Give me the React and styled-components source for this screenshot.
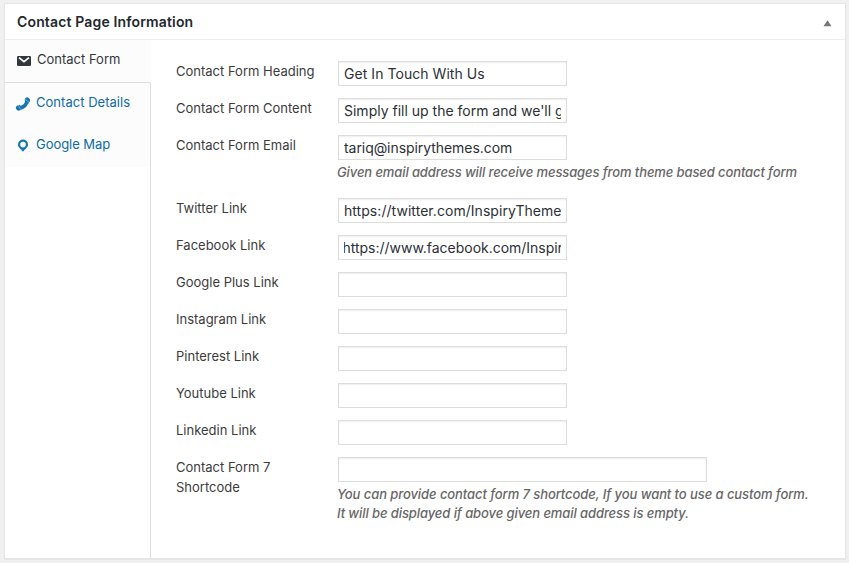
import React from "react";
import styled, { createGlobalStyle } from "styled-components";

const GlobalStyle = createGlobalStyle`
  *, *::before, *::after { box-sizing: border-box; }
  body {
    margin: 0;
    background: #f0f0f0;
    color: #3c3c3c;
    font-family: Inter, "Open Sans", sans-serif;
    font-size: 13px;
    line-height: 20px;
  }
`;

const Page = styled.main`
  height: 563px;
  padding: 3px 3px 4px 4px;
`;

const MetaBox = styled.section`
  display: flex;
  flex-direction: column;
  height: 556px;
  background: #fff;
  border: 1px solid #e5e5e5;
  box-shadow: 0 1px 1px rgba(0, 0, 0, 0.04);
`;

const Header = styled.header`
  display: flex;
  align-items: center;
  justify-content: space-between;
  height: 36px;
  flex: none;
  padding: 0 13px 0 12px;
  border-bottom: 1px solid #eee;
`;

const Title = styled.h2`
  margin: 0;
  color: #23282d;
  font-size: 14px;
  font-weight: 600;
  line-height: 20px;
  letter-spacing: 0.15px;
`;

const Toggle = styled.button`
  display: flex;
  padding: 3px 0 0;
  border: 0;
  background: none;
  color: #72777c;
`;

const Body = styled.div`
  display: flex;
  flex: 1;
`;

const Sidebar = styled.nav`
  display: flex;
  flex-direction: column;
  width: 146px;
`;

const Tab = styled.a`
  display: flex;
  height: ${(p) => (p.$active ? 43 : 42)}px;
  padding: ${(p) => (p.$active ? "9px 0 0 12px" : "9px 0 0 10px")};
  background: #fcfcfc;
  border-right: 1px solid ${(p) => (p.$active ? "transparent" : "#ddd")};
  border-bottom: ${(p) => (p.$active ? "1px solid #ddd" : "0")};
  color: ${(p) => (p.$active ? "#32373c" : "#0c6ca6")};
  letter-spacing: ${(p) => p.$tracking}px;
  text-decoration: none;
  white-space: nowrap;
`;

const TabIcon = styled.svg`
  flex: none;
  width: 16px;
  height: 16px;
  margin: ${(p) => (p.$active ? "4px 4px 0 -1px" : "4px 5px 0 0")};
  color: ${(p) => (p.$active ? "#32373c" : "#1577b0")};
`;

const TabText = styled.span`
  padding-left: ${(p) => (p.$active ? 1 : 0)}px;
`;

const SidebarRest = styled.div`
  flex: 1;
  border-right: 1px solid #ddd;
`;

const Form = styled.form`
  flex: 1;
  display: flex;
  flex-direction: column;
  gap: 12px;
  padding: 21px 0 0 25px;
`;

const Row = styled.div`
  display: grid;
  grid-template-columns: 162px 1fr;
  align-items: start;
  min-height: 25px;
`;

const Label = styled.label`
  width: 130px;
  white-space: ${(p) => (p.$wrap ? "pre-line" : "nowrap")};
`;

const Field = styled.div`
  display: flex;
  flex-direction: column;
`;

const Input = styled.input`
  width: ${(p) => (p.$wide ? 369 : 229)}px;
  height: 25px;
  margin: 0;
  padding: 3px 5px;
  border: 1px solid #ddd;
  border-radius: 0;
  background: #fff;
  box-shadow: inset 0 1px 2px rgba(0, 0, 0, 0.07);
  color: #2b3036;
  font: 14px/17px Inter, "Open Sans", sans-serif;
  letter-spacing: ${(p) => p.$tracking}px;
  text-indent: ${(p) => p.$shift || 0}px;
  outline: none;
`;

const Description = styled.p`
  margin: 3px 0 4px -1px;
  color: #666;
  font-style: italic;
  font-weight: 500;
  line-height: 19px;
  white-space: nowrap;
`;

const Line = styled.span`
  display: block;
  letter-spacing: ${(p) => p.$tracking}px;
`;

const MailIcon = () => (
  <TabIcon $active viewBox="0 0 16 16">
    <path fill="currentColor" d="M2.200 3h11.600q1.200 0 1.200 1.200v7.600q0 1.200-1.200 1.200H2.200q-1.200 0-1.200-1.200V4.200q0-1.200 1.200-1.200z" />
    <path fill="none" stroke="#fff" strokeWidth="1.700" d="M3 4.600 8 8.700l5-4.100" />
  </TabIcon>
);

const PhoneIcon = () => (
  <TabIcon viewBox="0 0 16 16">
    <path
      fill="none"
      stroke="currentColor"
      strokeWidth="3.600"
      d="M12 4.500C11.600 8.500 9 11.300 4.500 11.900"
    />
    <path
      fill="currentColor"
      d="M10.300 2.200q1.700-1.700 3.500-.2t1.200 3.100l-1.500 2.600-4-3.400zM2 9.700q-1.900 1.200-1 3.100t2.900 1.900l3.600-1.400-2.800-4.500z"
    />
    <path fill="none" stroke="#fcfcfc" strokeWidth=".4" d="m10 3.300 4.500 3.500M3.300 9.400l2.700 4.400" />
  </TabIcon>
);

const PinIcon = () => (
  <TabIcon viewBox="0 0 16 16">
    <path
      fill="currentColor"
      fillRule="evenodd"
      d="M8 1.500a5 5 0 0 1 5 5c0 2.900-2.700 4.200-5 7.300-2.300-3.100-5-4.400-5-7.300a5 5 0 0 1 5-5m0 2.300a2.800 2.800 0 1 0 0 5.600 2.800 2.800 0 0 0 0-5.600"
    />
  </TabIcon>
);

const fields = [
  { label: "Contact Form Heading", value: "Get In Touch With Us", vt: 0.05 },
  { label: "Contact Form Content", value: "Simply fill up the form and we'll get back to you" },
  {
    label: "Contact Form Email",
    value: "tariq@inspirythemes.com",
    vt: -0.06,
    note: [{ text: "Given email address will receive messages from theme based contact form", t: -0.11 }],
  },
  { label: "Twitter Link", value: "https://twitter.com/InspiryThemes", vt: 0.05 },
  { label: "Facebook Link", value: "https://www.facebook.com/InspiryThemes", shift: -1.5, vt: -0.02 },
  { label: "Google Plus Link" },
  { label: "Instagram Link" },
  { label: "Pinterest Link" },
  { label: "Youtube Link" },
  { label: "Linkedin Link" },
  {
    label: "Contact Form 7\nShortcode",
    wide: true,
    note: [
      { text: "You can provide contact form 7 shortcode, If you want to use a custom form.", t: -0.08 },
      { text: "It will be displayed if above given email address is empty.", t: -0.09 },
    ],
  },
];

export default function App() {
  return (
    <>
      <GlobalStyle />
      <Page>
        <MetaBox>
          <Header>
            <Title>Contact Page Information</Title>
            <Toggle type="button" aria-label="Toggle panel">
              <svg width="9" height="7" viewBox="0 0 9 7">
                <path fill="currentColor" d="M4.500.3 8.500 6.300h-8z" />
              </svg>
            </Toggle>
          </Header>
          <Body>
            <Sidebar>
              <Tab $active $tracking={0}><MailIcon /><TabText $active>Contact Form</TabText></Tab>
              <Tab $tracking={0.03}><PhoneIcon /><TabText>Contact Details</TabText></Tab>
              <Tab $tracking={-0.05}><PinIcon /><TabText>Google Map</TabText></Tab>
              <SidebarRest />
            </Sidebar>
            <Form>
              {fields.map((f) => (
                <Row key={f.label}>
                  <Label $wrap={f.wide}>{f.label}</Label>
                  <Field>
                    <Input
                      type="text"
                      defaultValue={f.value}
                      $wide={f.wide}
                      $shift={f.shift}
                      $tracking={f.vt || 0}
                    />
                    {f.note && (
                      <Description>
                        {f.note.map((n) => (
                          <Line key={n.text} $tracking={n.t || 0}>{n.text}</Line>
                        ))}
                      </Description>
                    )}
                  </Field>
                </Row>
              ))}
            </Form>
          </Body>
        </MetaBox>
      </Page>
    </>
  );
}
